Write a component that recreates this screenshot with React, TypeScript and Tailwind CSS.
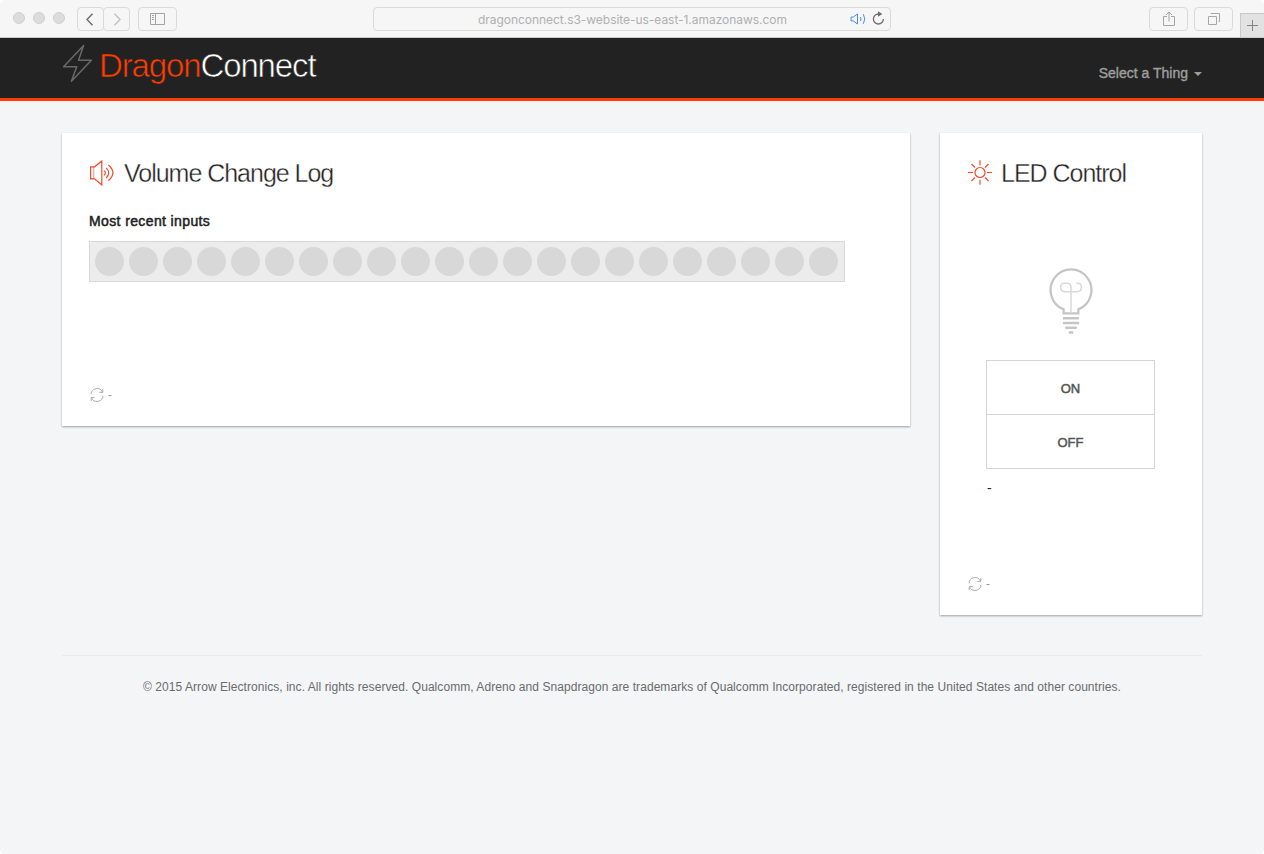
import React from "react";

const INPUT_COUNT = 22;

function ToolbarButton({ className, children }: { className: string; children: React.ReactNode }) {
  return (
    <button className={`flex h-6 shrink-0 items-center justify-center rounded-[4px] border border-[#dadada] bg-[#f6f6f6] ${className}`}>
      {children}
    </button>
  );
}

function BrowserBar() {
  return (
    <div className="flex h-[38px] items-start rounded-t-[5px] border-b border-[#c9c9c9] bg-[#f6f6f6] pl-[13px]">
      <div className="mt-3 flex gap-2">
        <span className="size-3 rounded-full border border-[#cfcfcf] bg-[#dcdcdc]" />
        <span className="size-3 rounded-full border border-[#cfcfcf] bg-[#dcdcdc]" />
        <span className="size-3 rounded-full border border-[#cfcfcf] bg-[#dcdcdc]" />
      </div>
      <div className="mt-[7px] ml-3 flex">
        <ToolbarButton className="w-[27px] pr-0.5">
          <svg width="8" height="13" viewBox="0 0 8 13" fill="none" stroke="#737373" strokeWidth="1.6"><path d="M6.5 .8 1 6.5l5.5 5.7" /></svg>
        </ToolbarButton>
        <ToolbarButton className="-ml-px w-[27px]">
          <svg width="8" height="13" viewBox="0 0 8 13" fill="none" stroke="#c4c4c4" strokeWidth="1.6"><path d="M1.5 .8 7 6.5l-5.5 5.7" /></svg>
        </ToolbarButton>
      </div>
      <ToolbarButton className="mt-[7px] ml-2 w-[39px]">
        <svg width="15" height="12" viewBox="0 0 15 12" fill="none" stroke="#a3a3a3"><path d="M.5 .5h14v11H.5zM5.5 .5v11M2 2.5h2M2 4.5h2M2 6.5h2" /></svg>
      </ToolbarButton>
      <div className="mt-[7px] ml-[196px] flex h-6 w-[518px] items-center rounded-[4px] border border-[#dadada] pl-[104px]">
        <span className="w-[309px] whitespace-nowrap pt-px font-['Inter',sans-serif] text-[12px] leading-6 tracking-[-0.04px] text-[#b0b0b0]">
          dragonconnect.s3-website-us-east-1.amazonaws.com
        </span>
        <svg className="ml-[63px]" width="17" height="12" viewBox="0 0 17 12" fill="none" stroke="#4a8af0">
          <path d="M1 4.1h2.2L7.5 1v10L3.2 7.9H1z M10.5 4q1 2 0 4M13.3 1.2q3 4.8 0 9.6" />
        </svg>
        <svg className="mb-0.5 ml-[5px]" width="13" height="14" viewBox="0 0 13 14" fill="none">
          <path d="M6.5 3A5 5 0 1 0 11.4 8" stroke="#6c6c6c" strokeWidth="1.3" />
          <path d="M6 .2 10.3 3 6 5.8z" fill="#6c6c6c" />
        </svg>
      </div>
      <ToolbarButton className="mt-[7px] ml-[258px] w-[39px]">
        <svg width="12" height="16" viewBox="0 0 12 16" fill="none" stroke="#a6a6a6"><path d="M4 5.5H.5v9h11v-9H8M6 10.5V1M3 4 6 1l3 3" /></svg>
      </ToolbarButton>
      <ToolbarButton className="mt-[7px] ml-1.5 w-[39px]">
        <svg width="12" height="12" viewBox="0 0 12 12" fill="none" stroke="#a6a6a6"><path d="M.5 3.5h8v8h-8zM3 1V.5h8.5v8h-1" /></svg>
      </ToolbarButton>
      <button className="mt-[13px] ml-[7px] flex h-6 w-6 items-center justify-center border-t border-l border-[#c9c9c9] bg-[#e2e2e2]">
        <svg width="11" height="11" viewBox="0 0 11 11" stroke="#858585"><path d="M5.5 0v11M0 5.5h11" /></svg>
      </button>
    </div>
  );
}

function SiteHeader() {
  return (
    <header className="flex h-[63px] justify-between border-b-[3px] border-[#ff3d00] bg-[#222] pr-[62px] pl-[62px]">
      <div className="flex">
        <svg className="mt-[6px]" width="32" height="40" viewBox="0 0 32 40" fill="none" stroke="#696969" strokeWidth="1.5" strokeLinejoin="round">
          <path d="M21.6 1.4 1.6 22.8h13.1L9.4 37.3 29.4 16.2H16.5z" />
        </svg>
        <h1 className="ml-[5px] pt-[10px] text-[33px] leading-9 font-normal tracking-[-1.13px] whitespace-nowrap [-webkit-text-stroke:0.6px_#222]">
          <span className="text-[#ff3d00]">Dragon</span>
          <span className="text-white">Connect</span>
        </h1>
      </div>
      <button className="mt-[25px] flex h-5 items-center text-[14px] leading-5 tracking-[0px] text-[#9d9d9d] [-webkit-text-stroke:0.4px_#9d9d9d]">
        Select a Thing
        <span className="mt-0.5 ml-1.5 border-x-4 border-t-4 border-x-transparent border-t-[#9d9d9d]" />
      </button>
    </header>
  );
}

function Refresh() {
  return (
    <div className="flex items-center text-[12px] leading-[14px] text-[#999]">
      <svg width="14" height="14" viewBox="0 0 14 14" fill="none" stroke="#a5a5a5" strokeWidth=".9">
        <path d="M1 6.3A6 6 0 0 1 12.5 4.2M12.8 1v3.4H9.3M13 7.7A6 6 0 0 1 1.5 9.8M1.2 13V9.6h3.5" />
      </svg>
      <span className="ml-1">-</span>
    </div>
  );
}

function SpeakerIcon() {
  return (
    <svg width="26" height="26" viewBox="0 0 26 26" fill="none" stroke="#f5492a" strokeWidth="1.2">
      <path d="M1.6 6.8h3.9L12.8 1v24l-7.3-6.2H1.6zM15 10.6q2.8 2.2 0 4.6M17.2 7.8q5 5 0 10.2M19.4 5q9 7.8 0 15.8" />
      <path d="M4.7 7v12" strokeOpacity=".5" />
    </svg>
  );
}

function SunIcon() {
  return (
    <svg width="24" height="25" viewBox="0 0 24 25" fill="none" stroke="#f5492a" strokeWidth="1.2">
      <circle cx="12" cy="12.5" r="5" />
      <path d="M12 .3v5M12 19.7v5M0 12.5h5M19 12.5h5M3.5 4 7 7.5M17 17.5l3.5 3.5M20.5 4 17 7.5M7 17.5 3.5 21" />
    </svg>
  );
}

function BulbIcon() {
  return (
    <svg width="44" height="68" viewBox="0 0 44 68" fill="none" stroke="#c5c5c5" strokeWidth="2.3" strokeLinecap="round">
      <path d="M14.6 47.4v-4A20.4 20.7 0 1 1 29.4 43.4v4z" strokeLinejoin="miter" />
      <path d="M15 52.3h14M15 57h14M17.2 61.8h9.6M20.8 66.4h2.4" strokeWidth="2.5" />
      <path d="M22 46V21q0-3.8-3.8-3.8h-2.4q-4.2 0-4.2 4.1t4.2 4.4h12.4q4.2 0 4.2-4.4T28 17.2" stroke="#d9d9d9" strokeWidth="1.5" />
    </svg>
  );
}

const cardClass = "bg-white shadow-[0_1px_2px_rgba(0,0,0,0.36)]";
const headingClass =
  "text-[25px] leading-[26px] font-normal tracking-[-1.02px] whitespace-nowrap text-[#222] [-webkit-text-stroke:0.35px_white]";

export default function App() {
  return (
    <div className="h-[854px] w-[1264px] overflow-hidden bg-white font-['Liberation_Sans',Arial,sans-serif]">
      <BrowserBar />
      <div className="h-[816px] rounded-b-[5px] bg-[#f3f5f7]">
        <SiteHeader />
        <main className="flex items-start gap-[30px] px-[62px] pt-8">
          <section className={`flex h-[293px] w-[848px] flex-col pt-[26px] pl-[27px] ${cardClass}`}>
            <div className="flex items-center">
              <SpeakerIcon />
              <h2 className={`mt-px ml-[9px] ${headingClass}`}>Volume Change Log</h2>
            </div>
            <h3 className="mt-[25px] text-[14px] leading-5 font-normal tracking-[0.38px] text-[#222] [-webkit-text-stroke:0.5px_#222]">
              Most recent inputs
            </h3>
            <div className="mt-[10px] flex h-[41px] w-[756px] items-center gap-[5px] border border-[#d8d8d8] bg-[#ececec] pl-[5px]">
              {Array.from({ length: INPUT_COUNT }, (_, i) => (
                <span key={i} className="size-[29px] shrink-0 rounded-full bg-[#d8d8d8]" />
              ))}
            </div>
            <div className="mt-[106px] ml-px">
              <Refresh />
            </div>
          </section>

          <section className={`flex h-[482px] w-[262px] flex-col pt-[26px] pl-[28px] ${cardClass}`}>
            <div className="flex h-[26px] items-center">
              <SunIcon />
              <h2 className={`mt-px ml-[9px] ${headingClass}`}>LED Control</h2>
            </div>
            <div className="mt-[81px] ml-[81px] h-[68px]">
              <BulbIcon />
            </div>
            <div className="mt-[26px] ml-[18px] flex w-[169px] flex-col border border-[#d4d4d4] text-[13px] text-[#555] [-webkit-text-stroke:0.5px_#555]">
              <button className="h-[54px] border-b border-[#d4d4d4] pt-0.5">ON</button>
              <button className="h-[53px] pt-0.5">OFF</button>
            </div>
            <p className="mt-[9px] ml-[19px] text-[14px] leading-5 text-[#222]">-</p>
            <div className="mt-[79px]">
              <Refresh />
            </div>
          </section>
        </main>
        <footer className="mx-[62px] mt-10 border-t border-[#ebebed] pt-[22px] text-center text-[12px] leading-[18px] tracking-[0.06px] whitespace-nowrap text-[#6b6b6b]">
          © 2015 Arrow Electronics, inc. All rights reserved. Qualcomm, Adreno and Snapdragon are trademarks of Qualcomm Incorporated, registered in the United States and other countries.
        </footer>
      </div>
    </div>
  );
}
